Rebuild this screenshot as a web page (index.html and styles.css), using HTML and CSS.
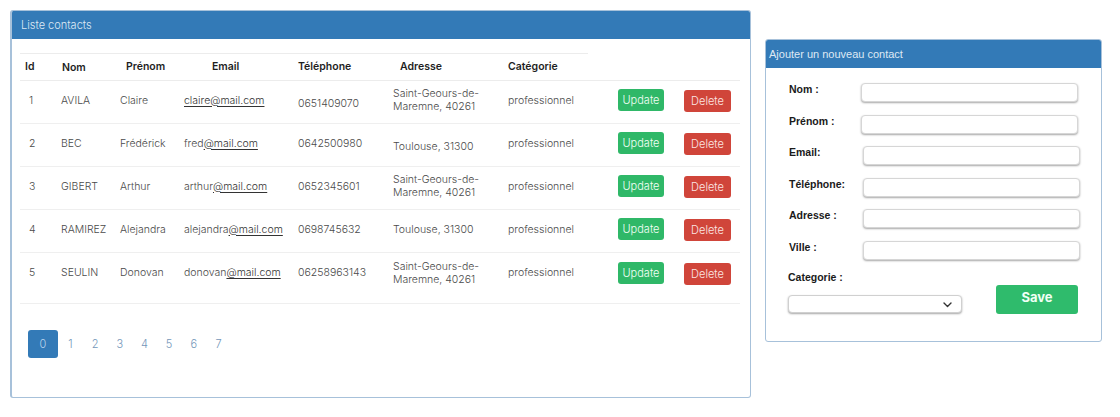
FILE: index.html
```html
<!DOCTYPE html>
<html lang="fr">
<head>
<meta charset="utf-8">
<title>Contacts</title>
<link rel="stylesheet" href="styles.css">
</head>
<body>
<div class="page">
  <section class="panel list">
    <div class="panel-head">Liste contacts</div>
    <div class="panel-body">
      <table class="contacts">
        <colgroup>
          <col class="w-id"><col class="w-nom"><col class="w-prenom"><col class="w-email"><col class="w-tel"><col class="w-adr"><col class="w-cat"><col class="w-upd"><col class="w-del">
        </colgroup>
        <thead>
          <tr>
            <th class="h-id">Id</th>
            <th class="h-nom">Nom</th>
            <th class="h-prenom">Prénom</th>
            <th class="h-email">Email</th>
            <th class="h-tel">Téléphone</th>
            <th class="h-adr">Adresse</th>
            <th class="h-cat">Catégorie</th>
            <th class="blank"></th>
            <th class="blank"></th>
          </tr>
        </thead>
        <tbody>
          <tr>
            <td class="c-id">1</td>
            <td class="c-nom">AVILA</td>
            <td class="c-prenom">Claire</td>
            <td class="c-email"><a class="mail full" href="#">claire@mail.com</a></td>
            <td class="c-tel low">0651409070</td>
            <td class="c-adr">Saint-Geours-de-<br>Maremne, 40261</td>
            <td class="c-cat">professionnel</td>
            <td class="c-upd"><button class="btn upd">Update</button></td>
            <td class="c-del"><button class="btn del">Delete</button></td>
          </tr>
          <tr>
            <td class="c-id">2</td>
            <td class="c-nom">BEC</td>
            <td class="c-prenom">Frédérick</td>
            <td class="c-email">fred<a class="mail" href="#">@mail.com</a></td>
            <td class="c-tel">0642500980</td>
            <td class="c-adr low">Toulouse, 31300</td>
            <td class="c-cat">professionnel</td>
            <td class="c-upd"><button class="btn upd">Update</button></td>
            <td class="c-del"><button class="btn del">Delete</button></td>
          </tr>
          <tr>
            <td class="c-id">3</td>
            <td class="c-nom">GIBERT</td>
            <td class="c-prenom">Arthur</td>
            <td class="c-email">arthur<a class="mail" href="#">@mail.com</a></td>
            <td class="c-tel">0652345601</td>
            <td class="c-adr">Saint-Geours-de-<br>Maremne, 40261</td>
            <td class="c-cat">professionnel</td>
            <td class="c-upd"><button class="btn upd">Update</button></td>
            <td class="c-del"><button class="btn del">Delete</button></td>
          </tr>
          <tr>
            <td class="c-id">4</td>
            <td class="c-nom">RAMIREZ</td>
            <td class="c-prenom">Alejandra</td>
            <td class="c-email">alejandra<a class="mail" href="#">@mail.com</a></td>
            <td class="c-tel">0698745632</td>
            <td class="c-adr">Toulouse, 31300</td>
            <td class="c-cat">professionnel</td>
            <td class="c-upd"><button class="btn upd">Update</button></td>
            <td class="c-del"><button class="btn del">Delete</button></td>
          </tr>
          <tr class="last">
            <td class="c-id">5</td>
            <td class="c-nom">SEULIN</td>
            <td class="c-prenom">Donovan</td>
            <td class="c-email">donovan<a class="mail" href="#">@mail.com</a></td>
            <td class="c-tel">06258963143</td>
            <td class="c-adr">Saint-Geours-de-<br>Maremne, 40261</td>
            <td class="c-cat">professionnel</td>
            <td class="c-upd"><button class="btn upd">Update</button></td>
            <td class="c-del"><button class="btn del">Delete</button></td>
          </tr>
        </tbody>
      </table>
      <nav class="pager">
        <a class="page-link active" href="#">0</a>
        <a class="page-link" href="#">1</a>
        <a class="page-link" href="#">2</a>
        <a class="page-link" href="#">3</a>
        <a class="page-link" href="#">4</a>
        <a class="page-link" href="#">5</a>
        <a class="page-link" href="#">6</a>
        <a class="page-link" href="#">7</a>
      </nav>
    </div>
  </section>

  <section class="panel add">
    <div class="panel-head add-head">Ajouter un nouveau contact</div>
    <form class="add-body">
      <div class="field"><label>Nom :</label><input type="text"></div>
      <div class="field"><label>Prénom :</label><input type="text"></div>
      <div class="field"><label>Email:</label><input type="text" class="shift"></div>
      <div class="field"><label>Téléphone:</label><input type="text" class="shift"></div>
      <div class="field"><label>Adresse :</label><input type="text" class="shift"></div>
      <div class="field"><label>Ville :</label><input type="text" class="shift"></div>
      <div class="bottom">
        <div class="cat">
          <label class="cat-label">Categorie :</label>
          <div class="select-wrap">
            <select class="select"><option></option></select>
            <svg class="chev" width="9" height="6" viewBox="0 0 9 6"><path d="M1 1l3.5 3.5L8 1" fill="none" stroke="#333" stroke-width="1.4" stroke-linecap="round" stroke-linejoin="round"/></svg>
          </div>
        </div>
        <button type="button" class="save">Save</button>
      </div>
    </form>
  </section>
</div>
</body>
</html>
```
FILE: styles.css
```css
* { box-sizing: border-box; }
body {
  margin: 0;
  background: #fff;
  font-family: Inter, "Noto Sans", sans-serif;
  color: #333;
}
.page {
  display: flex;
  align-items: flex-start;
  padding: 10px 0 0 10px;
}
.panel {
  border: 1px solid #a7c1da;
  border-radius: 3px;
  overflow: hidden;
  background: #fff;
}
.panel-head {
  background: #337ab7;
  color: #dfe9f4;
  height: 28px;
  line-height: 28px;
  font-size: 11px;
  font-weight: 300;
  padding-left: 9px;
}
.list {
  width: 741px;
  height: 388px;
  border-left-width: 2px;
}
.list .panel-body {
  padding: 14px 0 0 8px;
}
.contacts {
  border-collapse: collapse;
  table-layout: fixed;
  width: 720px;
}
.w-id { width: 33px; }
.w-nom { width: 60px; }
.w-prenom { width: 65px; }
.w-email { width: 112px; }
.w-tel { width: 95px; }
.w-adr { width: 115px; }
.w-cat { width: 88px; }
.w-upd { width: 87px; }
.w-del { width: 65px; }

.contacts th {
  font-size: 10.5px;
  font-weight: 600;
  color: #1f1f1f;
  text-align: left;
  height: 27px;
  padding: 0 0 2px;
  border-top: 1px solid #ececec;
  border-bottom: 1px solid #ececec;
  white-space: nowrap;
}
.contacts th.blank { border-top: none; }
.h-id { padding-left: 5px !important; }
.h-nom { padding-left: 9px !important; padding-top: 2px !important; }
.h-prenom { padding-left: 13px !important; }
.h-email { padding-left: 34px !important; }
.h-tel { padding-left: 8px !important; }
.h-adr { padding-left: 15px !important; }
.h-cat { padding-left: 8px !important; }

.contacts td {
  font-size: 10.5px;
  font-weight: 300;
  color: #4a4a4a;
  height: 43px;
  padding: 0 0 4px;
  border-bottom: 1px solid #efefef;
  vertical-align: middle;
  white-space: nowrap;
  line-height: 13px;
}
.contacts tr.last td {
  height: 51px;
  padding-bottom: 11px;
}
.c-id { padding-left: 9px !important; }
.c-nom { padding-left: 8px !important; }
.c-prenom { padding-left: 7px !important; }
.c-email { padding-left: 6px !important; }
.c-tel { padding-left: 8px !important; }
.c-adr { padding-left: 8px !important; }
.c-cat { padding-left: 8px !important; }
.c-upd { padding-left: 30px !important; }
.c-del { padding-left: 9px !important; }
.contacts td.low { padding-top: 6px; }
.mail {
  color: #333;
  text-decoration: underline;
  text-underline-offset: 2px;
}
.btn {
  font-family: Inter, sans-serif;
  font-size: 11px;
  font-weight: 300;
  color: #f2fff6;
  border: none;
  border-radius: 3px;
  height: 22px;
  padding: 0;
  cursor: pointer;
}
.btn.upd { background: #2fb868; width: 46px; }
.btn.del { background: #d0453a; width: 47px; color: #fbe7e4; margin-top: 2px; }

.pager {
  display: flex;
  align-items: center;
  margin-top: 26px;
  padding-left: 8px;
}
.page-link {
  font-size: 11px;
  font-weight: 300;
  color: #7396b9;
  text-decoration: none;
  width: 24.7px;
  text-align: center;
}
.page-link.active {
  width: 30px;
  height: 28px;
  line-height: 28px;
  background: #337ab7;
  color: #b9d3ec;
  border-radius: 3px;
}

/* Right form panel */
.add {
  width: 337px;
  height: 303px;
  margin-left: 14px;
  margin-top: 29px;
}
.add-head {
  font-family: "Liberation Sans", Arial, sans-serif;
  padding-left: 3px;
}
.add-body {
  padding: 15px 0 0 23px;
  font-family: "Liberation Sans", Arial, sans-serif;
}
.field {
  display: flex;
  align-items: flex-start;
  height: 19px;
  margin-bottom: 12.6px;
}
.field label {
  width: 72px;
  font-size: 10.5px;
  font-weight: bold;
  color: #1a1a1a;
  padding-top: 0;
}
.field input {
  width: 217px;
  height: 19px;
  border: 1px solid #d6d6d6;
  border-radius: 4px;
  box-shadow: 0 1px 2px rgba(0, 0, 0, 0.35);
  background: #fff;
  padding: 0 4px;
  font-size: 11px;
}
.field input.shift { margin-left: 2px; }
.bottom {
  display: flex;
  align-items: flex-start;
  margin-top: -2px;
  margin-left: -1px;
}
.cat { width: 174px; }
.cat-label {
  display: block;
  font-size: 10.5px;
  font-weight: bold;
  color: #1a1a1a;
  line-height: 12px;
  margin-bottom: 12px;
}
.select-wrap { position: relative; }
.select {
  appearance: none;
  -webkit-appearance: none;
  width: 174px;
  height: 18px;
  border: 1px solid #d0d0d0;
  border-radius: 4px;
  background: #fff;
  box-shadow: 0 1px 2px rgba(0, 0, 0, 0.35);
  display: block;
}
.chev {
  position: absolute;
  right: 10px;
  top: 7px;
}
.save {
  margin-left: 34px;
  margin-top: 14px;
  width: 82px;
  height: 29px;
  background: #2fbb6c;
  color: #f0fff5;
  border: none;
  border-radius: 3px;
  font-family: Inter, "Liberation Sans", sans-serif;
  font-size: 13px;
  font-weight: 700;
  padding-bottom: 5px;
}
```
